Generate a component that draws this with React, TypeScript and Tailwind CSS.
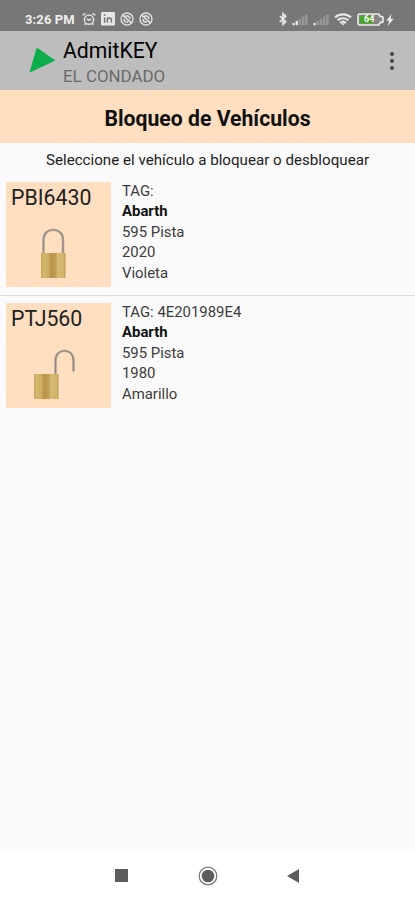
interface Vehicle {
  plate: string;
  tag: string;
  brand: string;
  model: string;
  year: string;
  color: string;
  locked: boolean;
}

const vehicles: Vehicle[] = [
  {
    plate: "PBI6430",
    tag: "",
    brand: "Abarth",
    model: "595 Pista",
    year: "2020",
    color: "Violeta",
    locked: true,
  },
  {
    plate: "PTJ560",
    tag: "4E201989E4",
    brand: "Abarth",
    model: "595 Pista",
    year: "1980",
    color: "Amarillo",
    locked: false,
  },
];

function AlarmIcon() {
  return (
    <svg width="14" height="14" viewBox="0 0 14 14" fill="none" stroke="#e0e0e0" strokeWidth="1.5">
      <circle cx="7" cy="7.7" r="4.6" />
      <path d="M0.8 3.4 3.4 1.2M13.2 3.4 10.6 1.2M4.8 6.8 7 8.4l2.2-1.6M3.6 11.4l-1.2 1.4M10.4 11.4l1.2 1.4" />
    </svg>
  );
}

function LinkedinIcon() {
  return (
    <svg width="14" height="14" viewBox="0 0 14 14">
      <rect width="14" height="13.4" rx="1.2" fill="#e6e6e6" />
      <path
        d="M3.6 5.4v5.4M6.4 5.4v5.4M6.4 8.2c0-2.8 4-2.8 4 0v2.6"
        fill="none"
        stroke="#777"
        strokeWidth="1.5"
      />
      <circle cx="3.6" cy="3.2" r="0.9" fill="#777" />
    </svg>
  );
}

function SyncOffIcon() {
  return (
    <svg width="14" height="14" viewBox="0 0 14 14" fill="none" stroke="#e0e0e0" strokeWidth="1.4">
      <circle cx="7" cy="7" r="6" />
      <path d="M2.8 3.4 11.4 10.8M5 4.4c2.4-1.4 5 0 5 2.6M4 7c0 2.4 1.8 3.6 4 2.8" strokeWidth="1.6" />
    </svg>
  );
}

function BluetoothIcon() {
  return (
    <svg width="8" height="14" viewBox="0 0 8 14" fill="none" stroke="#e6e6e6" strokeWidth="1.7">
      <path d="M0.8 4 6.8 9.8 4 12.4V1.6l2.8 2.6L0.8 10" />
    </svg>
  );
}

function SignalIcon({ level }: { level: number }) {
  return (
    <svg width="16" height="12" viewBox="0 0 16 12">
      {[0, 1, 2, 3, 4].map((i) => (
        <rect
          key={i}
          x={0.4 + i * 3.2}
          y={9 - i * 2.1}
          width="2.4"
          height={2.2 + i * 2.1}
          fill={i < level ? "#e6e6e6" : "#989898"}
        />
      ))}
    </svg>
  );
}

function WifiIcon() {
  return (
    <svg width="18" height="13" viewBox="0 0 18 13" fill="none" stroke="#e6e6e6" strokeWidth="2.1">
      <path d="M1 4.4c4.6-4 11.4-4 16 0M3.6 7.3c3.1-2.7 7.7-2.7 10.8 0M6 10c1.7-1.5 4.3-1.5 6 0" />
      <path d="M7 10.2h4L9 12.6z" fill="#e6e6e6" stroke="none" />
    </svg>
  );
}

function BatteryIcon() {
  return (
    <div className="relative h-[13px] w-[27px]">
      <svg width="27" height="13" viewBox="0 0 27 13">
        <path
          d="M2.5 1h19.3l1.6 2.6h1.8q.8 0 .8.8v4.2q0 .8-.8.8h-1.8L21.8 12H2.5Q1 12 1 10.5v-8Q1 1 2.5 1z"
          fill="#858585"
          stroke="#ededed"
          strokeWidth="1.6"
        />
        <rect x="2.8" y="2.8" width="13.4" height="7.4" fill="#43a91d" />
      </svg>
      <span className="absolute top-[2px] left-[7px] text-[9px] leading-[9px] font-bold text-white">
        64
      </span>
    </div>
  );
}

function StatusBar() {
  return (
    <div className="flex h-[31px] shrink-0 items-start bg-[#777777] pt-[12px] pl-[25px] text-[#eeeeee]">
      <span className="w-[57px] text-[13px] leading-[16px] font-bold tracking-[0.1px] whitespace-nowrap">
        3:26 PM
      </span>
      <div className="flex w-[197px] gap-[5px]">
        <AlarmIcon />
        <LinkedinIcon />
        <SyncOffIcon />
        <SyncOffIcon />
      </div>
      <BluetoothIcon />
      <div className="flex gap-[5px] pt-[2px] pl-[5px]">
        <SignalIcon level={2} />
        <SignalIcon level={1} />
      </div>
      <div className="pt-px pl-[5px]">
        <WifiIcon />
      </div>
      <div className="pt-px pl-[5px]">
        <BatteryIcon />
      </div>
      <svg className="mt-[2px] ml-[2px]" width="8" height="12" viewBox="0 0 8 12">
        <path d="M5.6 0 0.4 6.8h2.8L1.8 12l5.8-7.2H4.6z" fill="#eeeeee" />
      </svg>
    </div>
  );
}

function AppHeader() {
  return (
    <header className="flex h-[59px] shrink-0 bg-[#bdbdbd]">
      <svg className="mt-[16px] ml-[29px]" width="27" height="26" viewBox="0 0 27 26">
        <path d="M7.8 0.6 26.4 13.6 0.4 25.8z" fill="#0cae4b" />
      </svg>
      <div className="ml-[7px] flex-1 pt-[7px]">
        <h1 className="text-[21.2px] leading-[26px] text-black">AdmitKEY</h1>
        <p className="text-[16.9px] leading-[24px] text-[#6a6a6a]">EL CONDADO</p>
      </div>
      <button className="mt-[21px] mr-[21px] flex h-[18px] flex-col justify-between" aria-label="Menú">
        <span className="size-[4px] rounded-full bg-[#444444]" />
        <span className="size-[4px] rounded-full bg-[#444444]" />
        <span className="size-[4px] rounded-full bg-[#444444]" />
      </button>
    </header>
  );
}

function Padlock({ locked }: { locked: boolean }) {
  // The open shackle hangs over the right side of the body
  const x = locked ? 35 : 28;
  const shackle = locked
    ? "M37.5 31V17.5C37.5 4.5 57 4.5 57 17.5V31"
    : "M49.5 32V17.5C49.5 4.5 67.5 4.5 67.5 17.5V28.5";

  return (
    <svg className="block" width="105" height="60" viewBox="0 0 105 60">
      <defs>
        <linearGradient id="brass" x1="0" x2="1" y1="0" y2="0">
          <stop offset="0" stopColor="#c9a75c" />
          <stop offset="0.1" stopColor="#d4b66c" />
          <stop offset="0.32" stopColor="#ceae62" />
          <stop offset="0.38" stopColor="#b9954c" />
          <stop offset="0.6" stopColor="#c09c52" />
          <stop offset="0.68" stopColor="#d6ba74" />
          <stop offset="0.92" stopColor="#d2b36a" />
          <stop offset="1" stopColor="#bf9a4e" />
        </linearGradient>
      </defs>
      <path d={shackle} fill="none" stroke="#b9aca0" strokeWidth="2.6" />
      <path d={shackle} fill="none" stroke="#938980" strokeWidth="1.2" />
      <rect x={x} y="31" width="24.5" height="25" fill="url(#brass)" />
    </svg>
  );
}

function VehicleRow({ vehicle }: { vehicle: Vehicle }) {
  return (
    <div className="flex h-[121px] pl-[6px]">
      <div className="mt-[7px] h-[105px] w-[105px] bg-[#ffdfc0]">
        <div className="h-[40px] pt-[3px] pl-[5px] text-[21.3px] leading-[26px] text-[#222222]">
          {vehicle.plate}
        </div>
        <Padlock locked={vehicle.locked} />
      </div>
      <div className="pt-[6px] pl-[11px] text-[14.9px] leading-[20.4px] text-[#3c3c3c]">
        <p>TAG: {vehicle.tag}</p>
        <p className="font-bold text-[#111111]">{vehicle.brand}</p>
        <p>{vehicle.model}</p>
        <p>{vehicle.year}</p>
        <p>{vehicle.color}</p>
      </div>
    </div>
  );
}

function NavigationBar() {
  return (
    <nav className="flex h-[49px] shrink-0 items-center bg-white pl-[115px]">
      <span className="size-[13px] bg-[#5c5c5c]" />
      <svg className="ml-[70px]" width="20" height="20" viewBox="0 0 20 20">
        <circle cx="10" cy="10" r="8.8" fill="none" stroke="#777777" strokeWidth="1.3" />
        <circle cx="10" cy="10" r="6.3" fill="#5c5c5c" />
      </svg>
      <svg className="ml-[69px]" width="12" height="14" viewBox="0 0 12 14">
        <path d="M12 0v14L0 7z" fill="#5c5c5c" />
      </svg>
    </nav>
  );
}

export default function App() {
  return (
    <div className="flex h-[900px] w-[415px] flex-col overflow-hidden bg-[#fafafa] font-['Roboto',sans-serif]">
      <StatusBar />
      <AppHeader />
      <h2 className="h-[53px] shrink-0 bg-[#ffdfc0] pt-[14px] text-center text-[21.2px] leading-[29px] font-bold text-[#111111]">
        Bloqueo de Vehículos
      </h2>
      <main className="flex-1">
        <p className="h-[32px] pt-[7px] text-center text-[15.15px] leading-[20px] text-[#222222]">
          Seleccione el vehículo a bloquear o desbloquear
        </p>
        <ul>
          {vehicles.map((vehicle, i) => (
            <li key={vehicle.plate} className={i > 0 ? "-mt-px border-t border-[#dddddd]" : ""}>
              <VehicleRow vehicle={vehicle} />
            </li>
          ))}
        </ul>
      </main>
      <NavigationBar />
    </div>
  );
}
